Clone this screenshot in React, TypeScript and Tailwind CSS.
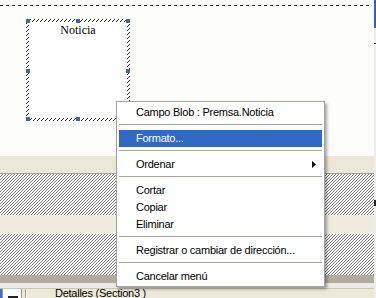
import React from "react";

function Hatch({ id }: { id: string }) {
  return (
    <div className="h-[41px] bg-white overflow-hidden">
      <svg width="374" height="41" shapeRendering="crispEdges">
        <defs>
          <pattern id={id} width="3" height="3" patternUnits="userSpaceOnUse">
            <rect x="0" y="2" width="1" height="1" fill="#7a7a7a" />
            <rect x="1" y="1" width="1" height="1" fill="#7a7a7a" />
            <rect x="2" y="0" width="1" height="1" fill="#7a7a7a" />
          </pattern>
        </defs>
        <rect width="374" height="41" fill={`url(#${id})`} />
      </svg>
    </div>
  );
}

function Item({
  label,
  active,
  arrow,
}: {
  label: string;
  active?: boolean;
  arrow?: boolean;
}) {
  return (
    <div
      className={
        active
          ? "h-[17px] flex items-center pl-[17px] bg-[#316ac5] text-white"
          : "h-[17px] flex items-center pl-[17px] text-black"
      }
    >
      <span className="leading-[17px] whitespace-pre">{label}</span>
      {arrow && (
        <svg className="ml-auto mr-[6px]" width="4" height="7" viewBox="0 0 4 7">
          <polygon points="0,0 4,3.5 0,7" fill="#000" />
        </svg>
      )}
    </div>
  );
}

function Sep() {
  return (
    <div className="h-[9px] pt-[3px]">
      <div className="h-px bg-[#aca899]" />
    </div>
  );
}

export default function App() {
  return (
    <div className="relative w-[376px] h-[298px] overflow-hidden flex bg-[#fdfdfb] font-['Liberation_Sans',Arial,sans-serif]">
      <div className="w-[374px] flex flex-col">
        {/* canvas */}
        <div className="h-[156px] flex flex-col bg-[#fdfdfb]">
          <div className="mt-[5px] h-px w-[370px] bg-[repeating-linear-gradient(90deg,#1e1e1e_0_3px,transparent_3px_6px)]" />
          <div className="ml-[26px] mt-[13px] relative w-[104px] h-[102px] p-[3px] bg-[repeating-linear-gradient(135deg,#2a2a2a_0_1px,#ffffff_1px_2.83px)]">
            <div className="h-full bg-white flex justify-center">
              <span className="mt-[1px] text-[12px] leading-[14px] text-black font-['Liberation_Serif','Times_New_Roman',serif]">
                Noticia
              </span>
            </div>
            <div className="absolute left-0 top-0 w-[4px] h-[4px] bg-[#4a6494]" />
            <div className="absolute left-[50px] top-0 w-[4px] h-[4px] bg-[#4a6494]" />
            <div className="absolute right-0 top-0 w-[4px] h-[4px] bg-[#4a6494]" />
            <div className="absolute left-0 top-[50px] w-[4px] h-[4px] bg-[#4a6494]" />
            <div className="absolute right-0 top-[50px] w-[4px] h-[4px] bg-[#4a6494]" />
            <div className="absolute left-0 bottom-0 w-[4px] h-[4px] bg-[#4a6494]" />
            <div className="absolute left-[50px] bottom-0 w-[4px] h-[4px] bg-[#4a6494]" />
          </div>
        </div>
        {/* bands */}
        <div className="h-[18px] bg-[#ebe8da] border-b border-[#a6a395]" />
        <Hatch id="h1" />
        <div className="h-[19px] bg-[#eeece1]" />
        <Hatch id="h2" />
        <div className="h-[8px] bg-[#b0ad9e]" />
        <div className="h-[5px] bg-[#ecebe3]" />
        {/* status bar */}
        <div className="h-[10px] flex items-start overflow-hidden bg-[#ece9d8] border-t border-[#c9c6b8]">
          <div className="w-[2px] h-full bg-[#3a6fc4]" />
          <div className="w-[20px] h-full bg-white border-l border-r border-[#9a9a9a] relative">
            <div className="absolute left-[5px] top-[7px] w-[10px] h-[2px] bg-[#222]" />
          </div>
          <div className="ml-[3px] w-[2px] h-full border-l border-r border-l-[#a6a395] border-r-white" />
          <span className="ml-[28px] -mt-[2px] text-[11px] leading-[13px] tracking-[-0.25px] text-black whitespace-pre">
            Detalles (Section3 )
          </span>
        </div>
      </div>
      {/* right edge */}
      <div className="w-[2px] flex flex-col bg-[#eeeeea]">
        <div className="h-[28px] bg-[#2f62c0]" />
        <div className="mt-[15px] h-px bg-[#222]" />
        <div className="mt-[156px] h-[6px] bg-[#222]" />
      </div>
      {/* context menu */}
      <div className="absolute left-[116px] top-[101px] w-[209px] bg-white border border-[#a3a3a3] shadow-[2px_2px_3px_rgba(0,0,0,0.35)] pt-[2px] pb-[1px] px-[2px] text-[11px] tracking-[-0.25px]">
        <Item label="Campo Blob : Premsa.Noticia" />
        <Sep />
        <Item label="Formato..." active />
        <Sep />
        <Item label="Ordenar" arrow />
        <Sep />
        <Item label="Cortar" />
        <Item label="Copiar" />
        <Item label="Eliminar" />
        <Sep />
        <Item label="Registrar o cambiar de dirección..." />
        <Sep />
        <Item label="Cancelar menú" />
      </div>
    </div>
  );
}
